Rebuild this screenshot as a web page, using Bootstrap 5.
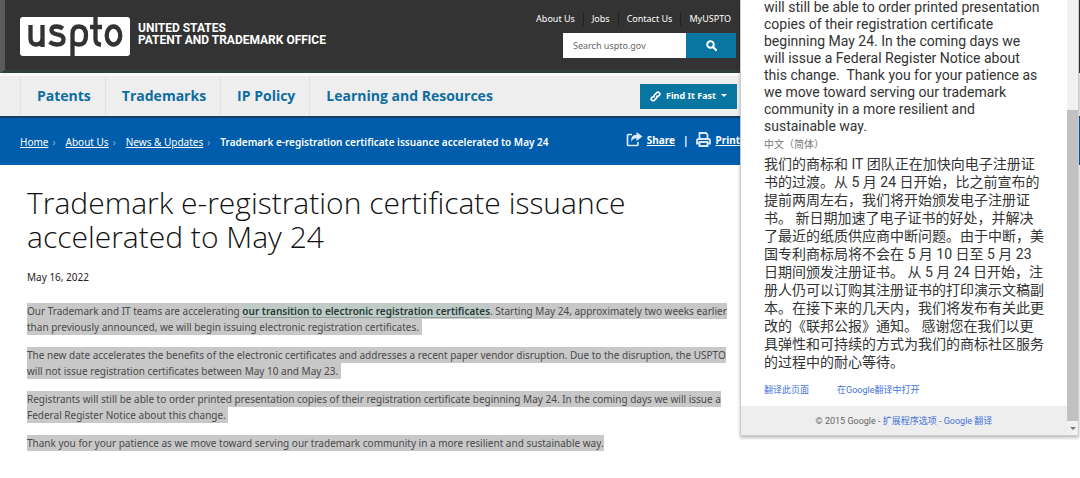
<!DOCTYPE html>
<html lang="en">
<head>
<meta charset="utf-8">
<meta name="viewport" content="width=device-width, initial-scale=1">
<title>Trademark e-registration certificate issuance accelerated to May 24 | USPTO</title>
<link href="https://cdn.jsdelivr.net/npm/bootstrap@5.3.0/dist/css/bootstrap.min.css" rel="stylesheet">
<style>
body { font-family: "Noto Sans", "Noto Sans CJK SC", sans-serif; font-size: 10px; line-height: 16px; color: #444; background: #fff; overflow-x: hidden; }
.shell { min-height: 100vh; }
.page-col { width: calc(100% - 340px); white-space: nowrap; }
.top-band { background: #333; border-left: 5px solid #5a5a5a; border-bottom: 3px solid #2b4039; height: 73px; }
.top-band .page-col { width: calc(100% - 339px); }
.brand-text { color: #fff; font: bold 12px/12px Roboto, sans-serif; padding: 14px 0 0 15px; }
.brand-text, .brand-text:hover { text-decoration: none; color: #fff; }
.brand-name { padding-bottom: 4px; }
.util { padding: 12px 2px 0 0; }
.util a { color: #fff; font-size: 9px; line-height: 14px; text-decoration: none; padding: 0 8px; border-left: 1px solid #222; }
.util a:first-child { border-left: 0; }
.site-search { width: 173px; height: 25px; margin: 7px 5px 0 0; }
.site-search input { font-size: 9px; padding: 0 10px; border: 0; border-radius: 0; min-height: 0; color: #555; background: #fff; }
.site-search input::placeholder { color: #666; }
.site-search button { width: 50px; flex: none; background: #0876a0; border: 0; border-radius: 0; padding: 0; color: #fff; }
.menu-band { background: #eee; border-top: 3px solid #f6f9f8; border-bottom: 2px solid #173e66; height: 45px; }
.menu-band .nav-link { font-family: "Open Sans", sans-serif; color: #0d6da0; font-size: 14px; line-height: 40px; font-weight: 700; padding: 0 14px 0 16px; border-left: 1px solid #e2e2e2; }
.fast { background: #0876a0; color: #fff; border: 0; border-radius: 0; font-size: 9px; line-height: 24px; font-weight: 700; padding: 0 10px; width: 97px; height: 25px; margin-right: 3px; }
.crumb-band { background: #005dab; color: #fff; height: 47px; font-size: 10px; }
.crumb-band a { color: #fff; }
.crumbs { padding-left: 20px; }
.crumbs b { font-weight: 600; }
.crumb-band .sep { color: #7fb0df; padding: 0 10px 0 4px; }
.crumb-band .tools { font-weight: 700; padding-bottom: 4px; }
.article { padding: 21px 0 0 27px; }
.article h1 { font-family: "Open Sans", sans-serif; font-size: 30px; line-height: 34px; font-weight: 300; color: #111; margin: 0 0 15px; }
.article .date { font-size: 10px; color: #222; margin-bottom: 18px; }
.article p { margin: 0 0 12px; }
.article p mark { background: #c8c8c8; color: #4a4a4a; padding: 1px 0; }
.article p a { color: #263c37; font-weight: 600; background: #c0cbc7; text-underline-offset: 2px; text-decoration-color: #8fa39c; }
.bubble { width: 339px; height: 436px; right: 1px; background: #fff; border: 1px solid #ccc; border-top: 0; box-shadow: 0 2px 3px rgba(0,0,0,.25); font-family: Roboto, "Noto Sans CJK SC", sans-serif; color: #333; white-space: nowrap; }
.bubble .source { font-size: 14px; line-height: 17px; margin: -1px 0 0; }
.bubble .lang { font-size: 10px; line-height: 20px; color: #777; }
.bubble .target { font-size: 14px; line-height: 18px; margin: 0; }
.bubble .inner { padding: 0 0 0 23px; }
.bubble .acts { font-size: 9px; line-height: 16px; gap: 28px; margin-top: 11px; }
.bubble a { color: #4272db; text-decoration: none; }
.bubble footer { background: #eee; height: 29px; font-size: 9px; color: #666; }
.track { width: 11px; background: #f1f1f1; padding-top: 110px; }
.thumb { background: #c1c1c1; height: 311px; }
</style>
</head>
<body>
<div class="shell position-relative">
  <header>
    <div class="top-band">
      <div class="page-col d-flex justify-content-between">
        <a href="#" class="brand-text d-flex align-items-center">
          <svg width="110" height="40" viewBox="0 0 110 40" role="img" aria-label="uspto logo">
            <rect width="110" height="39" y="1" rx="3" fill="#fff"/>
            <g fill="none" stroke="#333" stroke-width="4.3">
              <path d="M10.500 9V22Q10.500 28.500 16 28.500Q22.500 28.500 22.500 22V9M22.500 20V31"/>
              <path d="M43 12.500Q40 10.500 36.500 10.500Q31.500 10.500 31.500 14Q31.500 17.500 37 18.300Q43.500 19 43.500 23.500Q43.500 28.500 37 28.500Q33 28.500 29.500 26"/>
              <path d="M52.500 40V18Q52.500 10.500 59 10.500Q66 10.500 66 19.500Q66 28.500 59 28.500Q54 28.500 52.500 25"/>
              <path d="M75.500 0V23Q75.500 28.500 81 28.500M70 11H82"/>
              <ellipse cx="93.500" cy="19.500" rx="6.800" ry="9"/>
            </g>
          </svg>
          <span class="brand-name ms-2">UNITED STATES<br>PATENT AND TRADEMARK OFFICE</span>
        </a>
        <div class="d-flex flex-column align-items-end">
          <nav class="util d-flex" aria-label="Utility"><a href="#">About Us</a><a href="#">Jobs</a><a href="#">Contact Us</a><a href="#">MyUSPTO</a></nav>
          <form class="site-search input-group flex-nowrap">
            <input class="form-control" type="text" placeholder="Search uspto.gov" aria-label="Search uspto.gov">
            <button type="button" class="btn d-flex align-items-center justify-content-center" aria-label="Search"><svg width="11" height="11" viewBox="0 0 11 11" fill="none" stroke="#fff" stroke-width="2"><circle cx="4.500" cy="4.500" r="3.300"/><path d="M7 7l3 3" stroke-width="2.400" stroke-linecap="round"/></svg></button>
          </form>
        </div>
      </div>
    </div>
    <div class="menu-band">
      <div class="page-col d-flex align-items-center justify-content-between">
        <nav class="nav flex-nowrap ms-3 ps-1" aria-label="Main">
          <a class="nav-link" href="#">Patents</a><a class="nav-link" href="#">Trademarks</a><a class="nav-link" href="#">IP Policy</a><a class="nav-link" href="#">Learning and Resources</a>
        </nav>
        <button type="button" class="fast btn d-flex align-items-center justify-content-between"><svg width="11" height="11" viewBox="0 0 11 11" fill="none" stroke="#fff" stroke-width="1.700"><path d="M4.500 6.500Q3.300 5.300 4.500 4L6.700 1.700Q8 .7 9.300 1.800Q10.400 3 9.300 4.300L8 5.500M6.500 4.500Q7.700 5.700 6.500 7L4.300 9.300Q3 10.300 1.700 9.200Q.6 8 1.700 6.700L3 5.500"/></svg>Find It Fast<svg width="6" height="4" viewBox="0 0 6 4"><path d="M0 0h6L3 3z" fill="#fff"/></svg></button>
      </div>
    </div>
    <div class="crumb-band">
      <div class="page-col d-flex justify-content-between align-items-center h-100">
        <nav class="crumbs d-flex" aria-label="Breadcrumb"><a href="#">Home</a><span class="sep">›</span><a href="#">About Us</a><span class="sep">›</span><a href="#">News &amp; Updates</a><span class="sep">›</span><b>Trademark e-registration certificate issuance accelerated to May 24</b></nav>
        <div class="tools d-flex align-items-center">
          <svg width="17" height="15" viewBox="0 0 17 15"><path d="M6 2.500H2.500Q1.500 2.500 1.500 3.500V12.500Q1.500 13.500 2.500 13.500H11Q12 13.500 12 12.500V10" fill="none" stroke="#dce9f5" stroke-width="1.700"/><path d="M10.500 0L16.500 4.500L10.500 9V6.300Q6.500 6.300 5.500 10Q4 3 10.500 2.800Z" fill="#dce9f5"/></svg>
          <a href="#" class="ms-1">Share</a><span class="px-2">|</span>
          <svg width="15" height="15" viewBox="0 0 15 15" fill="none" stroke="#dce9f5" stroke-width="1.800"><path d="M3.500 7V1H10L11.500 2.500V7M3.500 11.500H1V8.500Q1 7 2.500 7H12.500Q14 7 14 8.500V11.500H11.500M3.500 10H11.500V14H3.500Z"/></svg>
          <a href="#" class="ms-1">Print</a>
        </div>
      </div>
    </div>
  </header>
  <main class="article page-col">
    <h1>Trademark e-registration certificate issuance<br>accelerated to May 24</h1>
    <div class="date">May 16, 2022</div>
    <p><mark>Our Trademark and IT teams are accelerating <a href="#">our transition to electronic registration certificates</a>. Starting May 24, approximately two weeks earlier<br>than previously announced, we will begin issuing electronic registration certificates.&nbsp;</mark></p>
    <p><mark>The new date accelerates the benefits of the electronic certificates and addresses a recent paper vendor disruption. Due to the disruption, the USPTO<br>will not issue registration certificates between May 10 and May 23.&nbsp; </mark></p>
    <p><mark>Registrants will still be able to order printed presentation copies of their registration certificate beginning May 24. In the coming days we will issue a<br>Federal Register Notice about this change.&nbsp; </mark></p>
    <p><mark>Thank you for your patience as we move toward serving our trademark community in a more resilient and sustainable way.</mark></p>
  </main>
  <aside class="bubble position-absolute top-0 d-flex" aria-label="Translation">
    <div class="flex-grow-1 d-flex flex-column justify-content-between">
      <div class="inner">
        <p class="source">will still be able to order printed presentation<br>copies of their registration certificate<br>beginning May 24. In the coming days we<br>will issue a Federal Register Notice about<br>this change.&nbsp; Thank you for your patience as<br>we move toward serving our trademark<br>community in a more resilient and<br>sustainable way.</p>
        <div class="lang" lang="zh">中文（简体）</div>
        <p class="target" lang="zh">我们的商标和 IT 团队正在加快向电子注册证<br>书的过渡。从 5 月 24 日开始，比之前宣布的<br>提前两周左右，我们将开始颁发电子注册证<br>书。 新日期加速了电子证书的好处，并解决<br>了最近的纸质供应商中断问题。由于中断，美<br>国专利商标局将不会在 5 月 10 日至 5 月 23<br>日期间颁发注册证书。 从 5 月 24 日开始，注<br>册人仍可以订购其注册证书的打印演示文稿副<br>本。在接下来的几天内，我们将发布有关此更<br>改的《联邦公报》通知。 感谢您在我们以更<br>具弹性和可持续的方式为我们的商标社区服务<br>的过程中的耐心等待。</p>
        <div class="acts d-flex" lang="zh"><a href="#">翻译此页面</a><a href="#">在Google翻译中打开</a></div>
      </div>
      <footer class="d-flex align-items-center justify-content-center" lang="zh"><span>© 2015 Google - <a href="#">扩展程序选项</a> - <a href="#">Google 翻译</a></span></footer>
    </div>
    <div class="track d-flex flex-column justify-content-between align-items-stretch">
      <div class="thumb"></div>
      <svg class="align-self-center mb-1" width="6" height="4" viewBox="0 0 6 4"><path d="M0 0h6L3 3z" fill="#777"/></svg>
    </div>
  </aside>
</div>
<script src="https://cdn.jsdelivr.net/npm/bootstrap@5.3.0/dist/js/bootstrap.bundle.min.js"></script>
</body>
</html>
